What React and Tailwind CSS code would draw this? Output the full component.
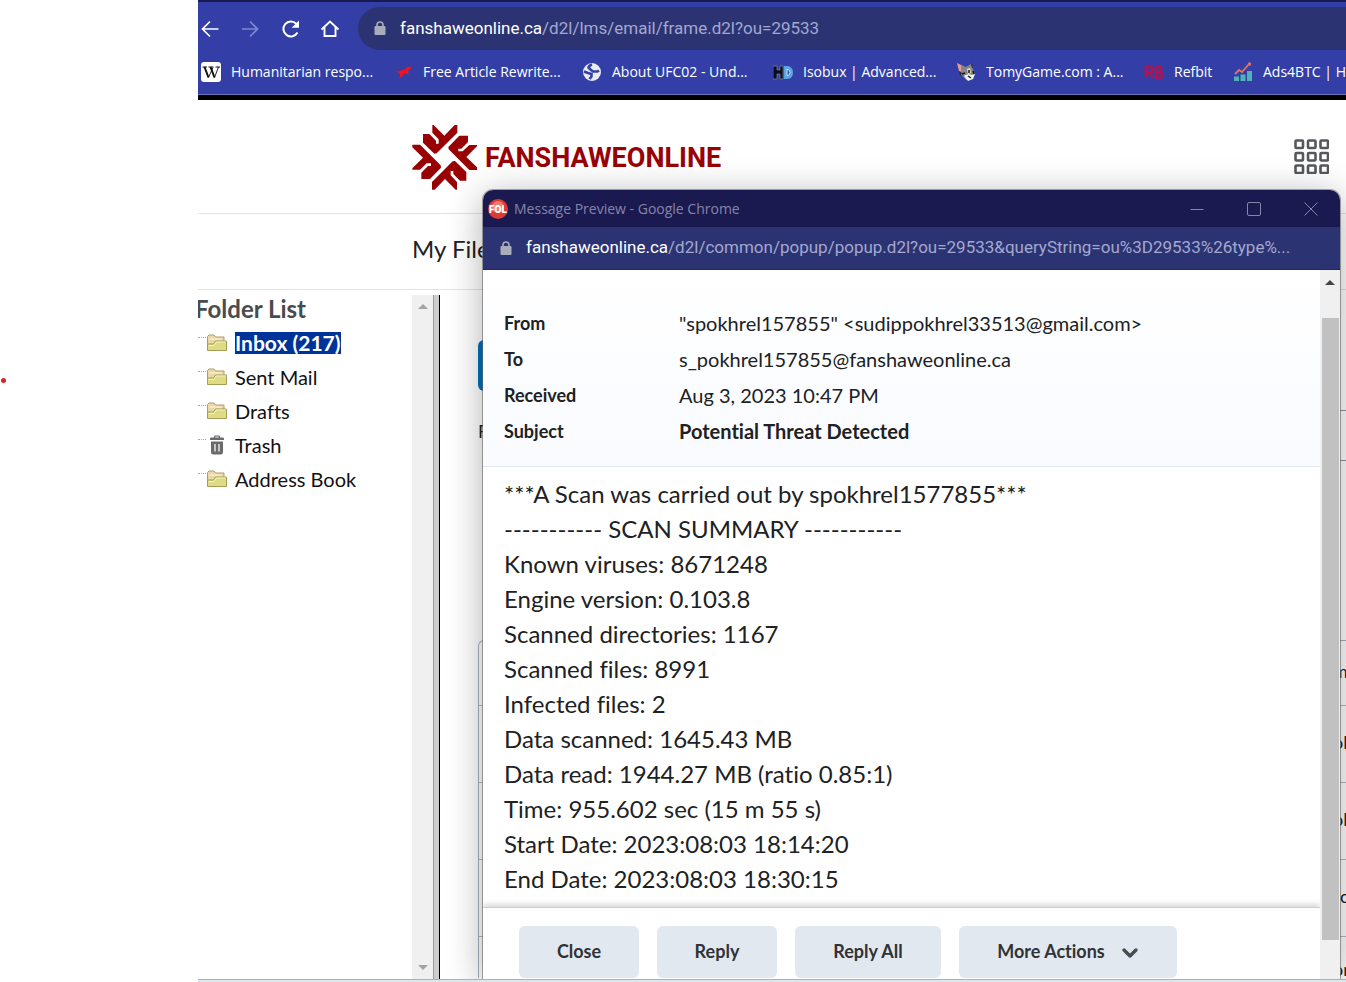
import React from "react";

const CHROME = "font-['Open_Sans','Segoe_UI',sans-serif]";
const URL_TEXT = "font-['Roboto','Segoe_UI',sans-serif] text-[17px] text-[#a3a8cf]";

function Lock() {
  return (
    <svg width="12" height="15" viewBox="0 0 12 15" aria-hidden="true" className="shrink-0">
      <rect x="0.5" y="5" width="11" height="9" rx="1" fill="#a9adbb" />
      <path d="M3 6V4a3 3 0 0 1 6 0v2" fill="none" stroke="#a9adbb" strokeWidth="1.6" />
    </svg>
  );
}

function Folder() {
  return (
    <svg width="22" height="20" viewBox="0 0 22 20" aria-hidden="true" className="shrink-0">
      <path d="M1.5 16V3.500L3 2h5l1.500 2h8.500v12z" fill="#ead9a6" stroke="#b39c66" />
      <path d="M3.500 6h12" stroke="#f8edca" strokeWidth="1.500" />
      <path d="M1.500 17.500V11h6l2-3h11v9.500z" fill="#dedb84" stroke="#a39e58" />
      <path d="M2.500 12.500h5.500l2-3.500H19.500" fill="none" stroke="#f5f3c4" />
    </svg>
  );
}

function Trash() {
  return (
    <svg width="22" height="22" viewBox="0 0 22 22" aria-hidden="true" className="shrink-0">
      <path d="M4 6V4.800q0-1 1-1.200h3V2.500q0-1 1-1h4q1 0 1 1v1.100h3q1 .2 1 1.200V6z" fill="#6b6b6b" />
      <path d="M9.200 3.500h3.600v-.9H9.200z" fill="#fff" />
      <path d="M5 7.500h12V18q0 2.500-2.500 2.500h-7Q5 20.500 5 18z" fill="#6b6b6b" />
      <path d="M9 10v7.500M13 10v7.500" stroke="#dedede" strokeWidth="1.600" />
    </svg>
  );
}

function WikiIcon() {
  return (
    <svg width="20" height="20" viewBox="0 0 20 20" aria-hidden="true">
      <rect width="20" height="20" rx="3" fill="#fff" />
      <path d="M1.500 5h4.500M7.500 5h5M14.500 5h4.500" stroke="#111" strokeWidth="1" />
      <path d="m3.500 5 4 10.500M9.500 5l4 10.500" stroke="#111" strokeWidth="2" />
      <path d="m7.500 15.500 4.500-10M13.500 15.500l4-10.500" stroke="#111" strokeWidth=".9" />
    </svg>
  );
}

function HorseIcon() {
  return (
    <svg width="20" height="20" viewBox="0 0 20 20" aria-hidden="true">
      <path d="M1 8.500 6 9l6-1.500L14 5l4-.5-.5 2.500-2 1-.5 3 1.500 1-2 .5-1-1-3 .5-2 3-2 .5.500-3-1-1.500-3 1.500L6 10z" fill="#f5121d" />
    </svg>
  );
}

function GlobeIcon() {
  return (
    <svg width="20" height="20" viewBox="0 0 20 20" aria-hidden="true">
      <circle cx="10" cy="10" r="9" fill="#e9ebf3" />
      <path d="M10 2.500q-3 1-3.500 3L9 8l2 1.500h4.500l1.500-1M2 9.500 6 11l3.500 1v2.500L7.500 17" fill="none" stroke="#3340a5" strokeWidth="2.600" />
    </svg>
  );
}

function HdIcon() {
  return (
    <svg width="20" height="20" viewBox="0 0 20 20" aria-hidden="true">
      <path d="M0 4h4v4h3V4h3v13H7v-5H4v5H0z" fill="#0b0d1c" stroke="#8794b8" strokeWidth=".6" />
      <path d="M11 4h4q5 1 5 6.500T15 17h-4z" fill="#5ba4e3" />
      <path d="M14 7.500h1q2 .5 2 3t-2 3h-1z" fill="#2b4f9e" stroke="#d6ebff" />
    </svg>
  );
}

function CatIcon() {
  return (
    <svg width="20" height="20" viewBox="0 0 20 20" aria-hidden="true">
      <path d="m1 1 6 3v7L3 9z" fill="#ee9a8f" />
      <path d="m5 3 5 2 5-3 2 5 2 5-4 5-5 1-5-6z" fill="#85868c" />
      <path d="m3 9 3 2-2 3zM15 3l1-2 1 6z" fill="#2c2c34" />
      <path d="m11 7 3-1 1 5-3 1z" fill="#efe39a" />
      <path d="m8 14 4-2 4 1 3-1-2 5-5 2z" fill="#f5f5f5" />
      <path d="M13 8v3M9 11l-3 1M12 14l3 2M17 9l1 3" stroke="#15151c" strokeWidth="1.500" />
    </svg>
  );
}

function RbIcon() {
  return (
    <svg width="20" height="20" viewBox="0 0 20 20" aria-hidden="true">
      <path d="M2 16V5h4.500q2 0 2 2.500T6 10H2M5 10l4 6M12 5v11M12 5h4.500q1.500 2.500-1 5H12h5q2 3-.5 6H12" fill="none" stroke="#b4114f" strokeWidth="2.600" />
    </svg>
  );
}

function ChartIcon() {
  return (
    <svg width="20" height="20" viewBox="0 0 20 20" aria-hidden="true">
      <path d="M1 14.500h5V19H1zM7.500 12.500h5V19h-5zM14 9h5v10h-5z" fill="#4fb3b5" />
      <path d="m2 12 4-4 3 2 7-8" fill="none" stroke="#e8705f" strokeWidth="1.800" />
      <circle cx="16.500" cy="2" r="1.700" fill="#e8705f" />
    </svg>
  );
}

const bookmarks = [
  { icon: WikiIcon, label: "Humanitarian respo...", w: "w-[192px]" },
  { icon: HorseIcon, label: "Free Article Rewrite...", w: "w-[189px]" },
  { icon: GlobeIcon, label: "About UFC02 - Und...", w: "w-[191px]" },
  { icon: HdIcon, label: "Isobux | Advanced...", w: "w-[183px]" },
  { icon: CatIcon, label: "TomyGame.com : A...", w: "w-[188px]" },
  { icon: RbIcon, label: "Refbit", w: "w-[89px]" },
  { icon: ChartIcon, label: "Ads4BTC | Hi", w: "w-[160px]" },
];

function BrowserBar() {
  return (
    <header className={`${CHROME} shrink-0 overflow-hidden border-b-[5px] border-black bg-[#333fa6]`}>
      <div className="h-[2px] bg-[#1b1a50]" />
      <div className="flex h-[53px] items-center pl-[2px]">
        <button aria-label="Back" className="w-10 shrink-0">
          <svg width="20" height="20" viewBox="0 0 20 20" fill="none" stroke="#fff" strokeWidth="1.700"><path d="M18.500 10H3M10 2.500 2.500 10l7.500 7.500" /></svg>
        </button>
        <button aria-label="Forward" className="w-10 shrink-0">
          <svg width="20" height="20" viewBox="0 0 20 20" fill="none" stroke="#7f89cf" strokeWidth="1.700"><path d="M2 10h15M10 2.500l7.500 7.500-7.500 7.500" /></svg>
        </button>
        <button aria-label="Reload" className="w-10 shrink-0">
          <svg width="22" height="20" viewBox="0 0 22 20" fill="none"><path d="M17.500 13.500A7.500 7.500 0 1 1 16.300 4.700" stroke="#fff" strokeWidth="2" /><path d="M19 1.500v7.300h-7.300z" fill="#fff" /></svg>
        </button>
        <button aria-label="Home" className="w-[38px] shrink-0">
          <svg width="20" height="20" viewBox="0 0 20 20" fill="none" stroke="#fff" strokeWidth="1.900"><path d="M1.500 10.500 10 2.500l8.500 8M4.500 8.500V17h11V8.500" /></svg>
        </button>
        <div className="-mr-5 flex h-[43px] flex-1 items-center rounded-full bg-[#2c3373] pl-4">
          <Lock />
          <span className={`${URL_TEXT} pl-[14px] whitespace-nowrap`}><span className="text-white">fanshaweonline.ca</span>/d2l/lms/email/frame.d2l?ou=29533</span>
        </div>
      </div>
      <nav className="flex h-[40px] items-start border-b border-[#6c74b5] pt-[7px] pl-[3px]">
        {bookmarks.map(({ icon: Icon, label, w }) => (
          <a key={label} href="#" className={`${w} flex shrink-0 items-center gap-[10px] text-[14px] leading-5 whitespace-nowrap text-white`}>
            <Icon />
            {label}
          </a>
        ))}
      </nav>
    </header>
  );
}

const MOTIF = "48,42 67,42 87,62 87,71 95,71 95,58 76,38 76,15 80,15 112,47 143,15 151,15 151,38 89,100 82,101 48,68";

function BrandLogo() {
  return (
    <svg width="74" height="74" viewBox="0 0 222 222" fill="#990205" aria-hidden="true" className="shrink-0">
      <polygon points={MOTIF} />
      <polygon points={MOTIF} transform="rotate(90 113 112)" />
      <polygon points={MOTIF} transform="rotate(180 113 112)" />
      <polygon points={MOTIF} transform="rotate(270 113 112)" />
    </svg>
  );
}

const folders = [
  { label: "Inbox (217)", icon: Folder, active: true },
  { label: "Sent Mail", icon: Folder },
  { label: "Drafts", icon: Folder },
  { label: "Trash", icon: Trash },
  { label: "Address Book", icon: Folder },
];

function FolderPane() {
  return (
    <aside className="w-[214px] shrink-0 overflow-hidden bg-white">
      <h2 className="-ml-[3px] text-[24px] leading-[28px] font-bold text-[#494c4e]">Folder List</h2>
      <ul className="pt-[3px]">
        {folders.map(({ label, icon: Icon, active }) => (
          <li key={label} className="flex h-[34px] items-center">
            <span className="mb-3 w-2 border-b border-dotted border-[#a8a8a8]" />
            <Icon />
            <a href="#" className={active ? "ml-[7px] bg-[#003399] text-[21px] leading-[22px] font-bold text-white" : "ml-[7px] text-[20px] leading-[22px] text-[#111]"}>{label}</a>
          </li>
        ))}
      </ul>
    </aside>
  );
}

const rows = [
  { text: "m", h: "h-[65px] items-center", w: "w-[13px]" },
  { text: "ol", h: "h-[77px] items-center", w: "w-[13px]" },
  { text: "ol", h: "h-[77px] items-center", w: "w-[13px]" },
  { text: "c", h: "h-[77px] items-center", w: "w-[6px]" },
  { text: "or", h: "h-[41px] items-end leading-[10px]", w: "w-[13px]" },
];

function MessageList() {
  return (
    <section className="min-w-0 flex-1 overflow-hidden pt-[45px] pl-[38px]">
      <button aria-label="Compose" className="block h-[51px] w-[140px] rounded-md bg-[#006fbf]" />
      <div className="mt-[19px] flex h-[51px] items-center">
        <label htmlFor="filter" className="pb-2 text-[18px] text-[#202122]">F</label>
        <input id="filter" className="ml-4 h-full min-w-0 flex-1 border-y border-[#8f959e]" />
      </div>
      <div className="mt-[179px] rounded-tl-md border-t border-l border-[#a9b1bd]">
        {rows.map((r, i) => (
          <div key={i} className={`${r.h} flex justify-end border-b border-[#b5bac2] text-[18px] text-[#202122] last:border-b-0`}>
            <span className={`${r.w} pb-1`}>{r.text}</span>
          </div>
        ))}
      </div>
    </section>
  );
}

const details = [
  ["From", '"spokhrel157855" <sudippokhrel33513@gmail.com>'],
  ["To", "s_pokhrel157855@fanshaweonline.ca"],
  ["Received", "Aug 3, 2023 10:47 PM"],
  ["Subject", "Potential Threat Detected"],
];

const report = [
  "***A Scan was carried out by spokhrel1577855***",
  "----------- SCAN SUMMARY -----------",
  "Known viruses: 8671248",
  "Engine version: 0.103.8",
  "Scanned directories: 1167",
  "Scanned files: 8991",
  "Infected files: 2",
  "Data scanned: 1645.43 MB",
  "Data read: 1944.27 MB (ratio 0.85:1)",
  "Time: 955.602 sec (15 m 55 s)",
  "Start Date: 2023:08:03 18:14:20",
  "End Date: 2023:08:03 18:30:15",
];

const BUTTON = "flex h-[52px] items-center justify-center rounded-md bg-[#e2e8f0] pb-[2px] text-[18px] font-bold text-[#303335]";

function PopupWindow() {
  return (
    <div role="dialog" aria-label="Message Preview" className="absolute top-[190px] right-[6px] bottom-0 left-[285px] flex flex-col overflow-hidden rounded-t-[10px] bg-white shadow-[0_6px_36px_rgba(0,0,0,0.32),0_0_0_1px_rgba(120,120,120,0.6)]">
      <div className={`${CHROME} flex h-[37px] shrink-0 items-center bg-[#1b1a50] pr-px pl-[5px] text-[14px] text-[#8685a8]`}>
        <svg width="20" height="20" viewBox="0 0 20 20" aria-hidden="true">
          <circle cx="10" cy="10" r="10" fill="#dd3a35" />
          <circle cx="10" cy="8" r="6" fill="#f07a70" />
          <text x="10" y="14" textAnchor="middle" fontFamily="Roboto, sans-serif" fontWeight="900" fontSize="10" fill="#fff">FOL</text>
        </svg>
        <span className="flex-1 pl-[6px]">Message Preview - Google Chrome</span>
        <button aria-label="Minimize" className="flex w-[57px] justify-center"><svg width="14" height="14" viewBox="0 0 14 14" stroke="#8685a8" fill="none"><path d="M.5 7.500h13" /></svg></button>
        <button aria-label="Maximize" className="flex w-[57px] justify-center"><svg width="14" height="14" viewBox="0 0 14 14" stroke="#8685a8" fill="none"><rect x=".5" y=".5" width="13" height="13" rx="1.500" /></svg></button>
        <button aria-label="Close window" className="flex w-[57px] justify-center"><svg width="14" height="14" viewBox="0 0 14 14" stroke="#8685a8" fill="none"><path d="m.5.5 13 13M13.500.5l-13 13" /></svg></button>
      </div>
      <div className="flex h-[43px] shrink-0 items-center border-b border-[#232a63] bg-[#2c3373] pl-[17px]">
        <Lock />
        <span className={`${URL_TEXT} truncate pl-[14px]`}><span className="text-white">fanshaweonline.ca</span>/d2l/common/popup/popup.d2l?ou=29533&amp;queryString=ou%3D29533%26type%...</span>
      </div>
      <div className="flex min-h-0 flex-1">
        <div className="flex min-w-0 flex-1 flex-col text-[#202122]">
          <dl className="grid shrink-0 grid-cols-[175px_1fr] border-b border-[#e3e9f1] bg-linear-to-b from-white to-[#f9fbff] pt-[35px] pb-[17px] pl-[21px]">
            {details.map(([k, v]) => (
              <React.Fragment key={k}>
                <dt className="text-[18px] leading-9 font-bold">{k}</dt>
                <dd className={k === "Subject" ? "text-[20px] leading-9 font-bold" : "text-[20px] leading-9"}>{v}</dd>
              </React.Fragment>
            ))}
          </dl>
          <div className="min-h-0 flex-1 overflow-hidden pt-[9px] pl-[21px] text-[24px] leading-[35px]">
            {report.map((line) => <p key={line}>{line}</p>)}
          </div>
          <footer className="flex shrink-0 gap-[18px] border-t border-[#cfcfcf] pt-[18px] pb-px pl-[36px] shadow-[0_-3px_5px_rgba(0,0,0,0.15)]">
            <button className={`${BUTTON} w-[120px]`}>Close</button>
            <button className={`${BUTTON} w-[120px]`}>Reply</button>
            <button className={`${BUTTON} w-[146px]`}>Reply All</button>
            <button className={`${BUTTON} w-[218px] gap-[16px]`}>
              More Actions
              <svg width="18" height="12" viewBox="0 0 18 12" fill="none" stroke="#494c4e" strokeWidth="3.400" strokeLinecap="round" strokeLinejoin="round" className="mt-1"><path d="m3 3 6 6 6-6" /></svg>
            </button>
          </footer>
        </div>
        <div className="flex w-5 shrink-0 flex-col items-center bg-[#f0f0f0] pb-[39px]">
          <svg width="10" height="5" viewBox="0 0 10 5" className="mt-[10px] mb-[33px] shrink-0"><path d="M0 5 5 0l5 5z" fill="#444" /></svg>
          <div className="w-[17px] flex-1 bg-[#c1c1c1]" />
        </div>
      </div>
    </div>
  );
}

export default function App() {
  return (
    <div className="flex min-h-screen overflow-hidden bg-white font-['Lato',sans-serif] [font-variant-ligatures:none]">
      <div className="w-[198px] shrink-0">
        <div className="mt-[378px] ml-px size-[5px] rounded-full bg-[#d8232a]" />
      </div>
      <div className="flex min-w-0 flex-1 flex-col border-b-2 border-[#d9e8ef]">
        <div className="relative flex flex-1 flex-col overflow-hidden border-b border-[#9fb6c0]">
          <BrowserBar />
          <div className="flex h-[114px] shrink-0 items-center border-b border-[#e3e3e3] pr-[17px] pl-[209px]">
            <BrandLogo />
            <span className="flex-1 pt-[3px] pl-1 font-['Roboto',sans-serif] text-[27px] font-bold text-[#990205]">FANSHAWEONLINE</span>
            <button aria-label="Course selector">
              <svg width="35" height="35" viewBox="0 0 35 35" fill="none" stroke="#55575a" strokeWidth="2.600">
                {[1.500, 14, 26.500].map((y) => [1.500, 14, 26.500].map((x) => <rect key={`${x}-${y}`} x={x} y={y} width="7.500" height="7.500" rx="1" />))}
              </svg>
            </button>
          </div>
          <nav className="flex h-[76px] shrink-0 items-center border-b border-[#e3e3e3] pb-[6px] pl-[214px]">
            <a href="#" className="text-[24px] text-[#202122]">My File</a>
          </nav>
          <div className="flex flex-1 bg-white">
            <div className="mt-[5px] flex min-w-0 flex-1">
              <FolderPane />
              <div className="flex w-[21px] shrink-0 flex-col items-center justify-between bg-[#f0f0f0] py-[9px]">
                <svg width="10" height="5" viewBox="0 0 10 5"><path d="M0 5 5 0l5 5z" fill="#a3a3a3" /></svg>
                <svg width="10" height="5" viewBox="0 0 10 5"><path d="m0 0 5 5 5-5z" fill="#a3a3a3" /></svg>
              </div>
              <div className="w-[7px] shrink-0 border-r border-l border-r-black border-l-[#9c9c9c] bg-[#cdcdcd]" />
              <MessageList />
            </div>
          </div>
          <PopupWindow />
        </div>
      </div>
    </div>
  );
}
